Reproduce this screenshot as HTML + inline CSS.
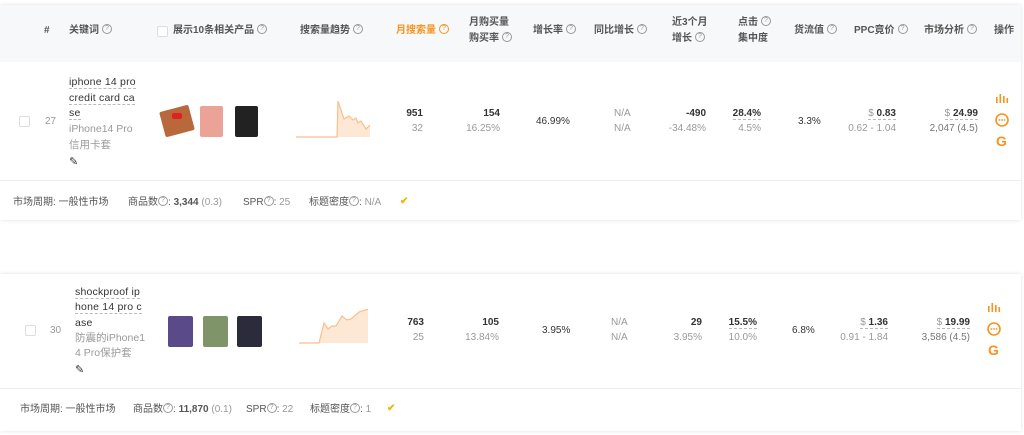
<!DOCTYPE html>
<html><head><meta charset="utf-8"><style>
*{margin:0;padding:0;box-sizing:border-box}
body{width:1024px;height:435px;background:#fff;position:relative;overflow:hidden;font-family:"Liberation Sans","Noto Sans CJK SC",sans-serif;font-size:10px;color:#333}
.a{position:absolute;white-space:nowrap;line-height:14px}
.card{position:absolute;background:#fff;box-shadow:0 0 4px rgba(0,0,0,.12)}
.h{color:#555;font-weight:bold;font-size:10px}
.q{display:inline-block;width:10px;height:10px;border:1px solid #999;border-radius:50%;font-size:7px;line-height:8px;text-align:center;color:#999;font-weight:normal;vertical-align:middle;margin-left:3px;position:relative;top:-1px}
.g{color:#999}
.b{color:#333;font-weight:bold}
.u{border-bottom:1px dashed #bbb}
.cb{position:absolute;width:11px;height:11px;border:1px solid #ddd;border-radius:2px;background:#fff}
.r{text-align:right}
.or{color:#f7931e}
.sep{position:absolute;height:1px;background:#eee}
.ph{position:absolute;border-radius:2px}
.kw{font-weight:normal;color:#333;font-size:10.5px;letter-spacing:.2px}
</style></head><body>
<div class="card" style="left:0;top:5px;width:1021px;height:215px"></div>
<div style="position:absolute;left:0;top:5px;width:1021px;height:57px;background:#f7f8fa"></div>
<div class="a h" style="left:44px;top:24px">#</div>
<div class="a h" style="left:69px;top:24px">关键词<span class="q">?</span></div>
<div class="cb" style="left:157px;top:26px"></div>
<div class="a h" style="left:173px;top:24px">展示10条相关产品<span class="q">?</span></div>
<div class="a h" style="left:300px;top:24px">搜索量趋势<span class="q">?</span></div>
<div class="a h or" style="left:396px;top:24px">月搜索量<span class="q" style="border-color:#f7931e;color:#f7931e">?</span></div>
<div class="a h" style="left:469px;top:15px;line-height:16px">月购买量<br>购买率<span class="q">?</span></div>
<div class="a h" style="left:533px;top:24px">增长率<span class="q">?</span></div>
<div class="a h" style="left:594px;top:24px">同比增长<span class="q">?</span></div>
<div class="a h" style="left:672px;top:15px;line-height:16px">近3个月<br>增长<span class="q">?</span></div>
<div class="a h" style="left:738px;top:15px;line-height:16px">点击<span class="q">?</span><br>集中度</div>
<div class="a h" style="left:794px;top:24px">货流值<span class="q">?</span></div>
<div class="a h" style="left:854px;top:24px">PPC竟价<span class="q">?</span></div>
<div class="a h" style="left:924px;top:24px">市场分析<span class="q">?</span></div>
<div class="a h" style="left:994px;top:24px">操作</div>

<!-- row 1 -->
<div class="cb" style="left:19px;top:116px"></div>
<div class="a g" style="left:45px;top:115px">27</div>
<div class="a kw" style="left:69px;top:75px;line-height:15.5px"><span class="u">iphone 14 pro</span><br><span class="u">credit card ca</span><br><span class="u">se</span></div>
<div class="a g" style="left:69px;top:122px;line-height:15.5px;font-size:10.5px">iPhone14 Pro<br>信用卡套</div>
<div class="a" style="left:69px;top:155px;font-size:11px">✎</div>
<div class="ph" style="left:162px;top:108px;width:30px;height:26px;background:#b8683a;transform:rotate(-15deg)"></div>
<div class="ph" style="left:172px;top:113px;width:10px;height:6px;background:#d22"></div>
<div class="ph" style="left:200px;top:106px;width:23px;height:31px;background:#eaa396"></div>
<div class="ph" style="left:235px;top:106px;width:23px;height:31px;background:#222"></div>
<svg style="position:absolute;left:296px;top:99px" width="75" height="40"><path d="M0 38 L41 38 L42 2 L48 20 L53 17 L57 21 L60 19 L62 24 L65 22 L70 30 L74 26 L74 38 Z" fill="#fde8d6"/><path d="M0 38 L41 38 L42 2 L48 20 L53 17 L57 21 L60 19 L62 24 L65 22 L70 30 L74 26" stroke="#f8c08c" fill="none" stroke-width="1.2"/></svg>
<div class="a b r" style="left:380px;width:43px;top:107px">951</div>
<div class="a g r" style="left:380px;width:43px;top:122px">32</div>
<div class="a b r" style="left:440px;width:60px;top:107px">154</div>
<div class="a g r" style="left:440px;width:60px;top:122px">16.25%</div>
<div class="a" style="left:536px;top:115px">46.99%</div>
<div class="a g" style="left:614px;top:107px">N/A</div>
<div class="a g" style="left:614px;top:122px">N/A</div>
<div class="a b r" style="left:640px;width:66px;top:107px">-490</div>
<div class="a g r" style="left:640px;width:66px;top:122px">-34.48%</div>
<div class="a b r" style="left:700px;width:61px;top:107px"><span class="u">28.4%</span></div>
<div class="a g r" style="left:700px;width:61px;top:122px">4.5%</div>
<div class="a" style="left:798px;top:115px">3.3%</div>
<div class="a b r" style="left:820px;width:76px;top:107px"><span class="u"><span class="g" style="font-weight:normal">$ </span>0.83</span></div>
<div class="a g r" style="left:820px;width:76px;top:122px">0.62 - 1.04</div>
<div class="a b r" style="left:900px;width:78px;top:107px"><span class="u"><span class="g" style="font-weight:normal">$ </span>24.99</span></div>
<div class="a r" style="left:900px;width:78px;top:122px;color:#777">2,047 (4.5)</div>
<svg style="position:absolute;left:995px;top:93px" width="16" height="60"><g fill="#f7931e"><rect x="1" y="4" width="1.6" height="6"/><rect x="4.5" y="1" width="1.6" height="9"/><rect x="8" y="3" width="1.6" height="7"/><rect x="11.5" y="5" width="1.6" height="5"/></g><circle cx="7" cy="27" r="6" stroke="#f7931e" stroke-width="1.6" fill="none"/><g fill="#f7931e"><circle cx="4.5" cy="27" r=".9"/><circle cx="7" cy="27" r=".9"/><circle cx="9.5" cy="27" r=".9"/></g><text x="1" y="53" font-family="Liberation Sans" font-weight="bold" font-size="14" fill="#f7931e">G</text></svg>
<div class="sep" style="left:0;top:180px;width:1021px"></div>
<div class="a" style="left:13px;top:196px;color:#555">市场周期: 一般性市场</div>
<div class="a" style="left:128px;top:196px;color:#555">商品数<span class="q" style="margin:0">?</span>: <b>3,344</b> <span class="g">(0.3)</span></div>
<div class="a" style="left:243px;top:196px;color:#555">SPR<span class="q" style="margin:0">?</span>: <span class="g">25</span></div>
<div class="a" style="left:309px;top:196px;color:#555">标题密度<span class="q" style="margin:0">?</span>: <span class="g">N/A</span></div>
<div class="a" style="left:400px;top:195px;color:#f5b400;font-weight:bold">✔</div>

<!-- card 2 -->
<div class="card" style="left:0;top:274px;width:1021px;height:157px"></div>
<div class="cb" style="left:25px;top:325px"></div>
<div class="a g" style="left:50px;top:324px">30</div>
<div class="a kw" style="left:75px;top:285px;line-height:15.3px"><span class="u">shockproof ip</span><br><span class="u">hone 14 pro c</span><br>ase</div>
<div class="a g" style="left:75px;top:331px;line-height:15px;font-size:10.5px">防震的iPhone1<br>4 Pro保护套</div>
<div class="a" style="left:75px;top:363px;font-size:11px">✎</div>
<div class="ph" style="left:168px;top:316px;width:25px;height:31px;background:#5a4a8a"></div>
<div class="ph" style="left:203px;top:316px;width:25px;height:31px;background:#7f9468"></div>
<div class="ph" style="left:237px;top:316px;width:25px;height:31px;background:#2b2b3b"></div>
<svg style="position:absolute;left:299px;top:309px" width="72" height="36"><path d="M0 34 L20 34 L25 14 L29 20 L33 17 L37 17 L43 7 L48 11 L52 10 L60 3 L69 0 L69 34 Z" fill="#fde8d6"/><path d="M0 34 L20 34 L25 14 L29 20 L33 17 L37 17 L43 7 L48 11 L52 10 L60 3 L69 0" stroke="#f8c08c" fill="none" stroke-width="1.2"/></svg>
<div class="a b r" style="left:380px;width:44px;top:316px">763</div>
<div class="a g r" style="left:380px;width:44px;top:331px">25</div>
<div class="a b r" style="left:440px;width:59px;top:316px">105</div>
<div class="a g r" style="left:440px;width:59px;top:331px">13.84%</div>
<div class="a" style="left:542px;top:324px">3.95%</div>
<div class="a g" style="left:611px;top:316px">N/A</div>
<div class="a g" style="left:611px;top:331px">N/A</div>
<div class="a b r" style="left:640px;width:62px;top:316px">29</div>
<div class="a g r" style="left:640px;width:62px;top:331px">3.95%</div>
<div class="a b r" style="left:700px;width:57px;top:316px"><span class="u">15.5%</span></div>
<div class="a g r" style="left:700px;width:57px;top:331px">10.0%</div>
<div class="a" style="left:792px;top:324px">6.8%</div>
<div class="a b r" style="left:820px;width:68px;top:316px"><span class="u"><span class="g" style="font-weight:normal">$ </span>1.36</span></div>
<div class="a g r" style="left:820px;width:68px;top:331px">0.91 - 1.84</div>
<div class="a b r" style="left:900px;width:70px;top:316px"><span class="u"><span class="g" style="font-weight:normal">$ </span>19.99</span></div>
<div class="a r" style="left:900px;width:70px;top:331px;color:#777">3,586 (4.5)</div>
<svg style="position:absolute;left:987px;top:302px" width="16" height="60"><g fill="#f7931e"><rect x="1" y="4" width="1.6" height="6"/><rect x="4.5" y="1" width="1.6" height="9"/><rect x="8" y="3" width="1.6" height="7"/><rect x="11.5" y="5" width="1.6" height="5"/></g><circle cx="7" cy="27" r="6" stroke="#f7931e" stroke-width="1.6" fill="none"/><g fill="#f7931e"><circle cx="4.5" cy="27" r=".9"/><circle cx="7" cy="27" r=".9"/><circle cx="9.5" cy="27" r=".9"/></g><text x="1" y="53" font-family="Liberation Sans" font-weight="bold" font-size="14" fill="#f7931e">G</text></svg>
<div class="sep" style="left:0;top:388px;width:1021px"></div>
<div class="a" style="left:20px;top:403px;color:#555">市场周期: 一般性市场</div>
<div class="a" style="left:133px;top:403px;color:#555">商品数<span class="q" style="margin:0">?</span>: <b>11,870</b> <span class="g">(0.1)</span></div>
<div class="a" style="left:246px;top:403px;color:#555">SPR<span class="q" style="margin:0">?</span>: <span class="g">22</span></div>
<div class="a" style="left:310px;top:403px;color:#555">标题密度<span class="q" style="margin:0">?</span>: <span class="g">1</span></div>
<div class="a" style="left:387px;top:402px;color:#f5b400;font-weight:bold">✔</div>
</body></html>
